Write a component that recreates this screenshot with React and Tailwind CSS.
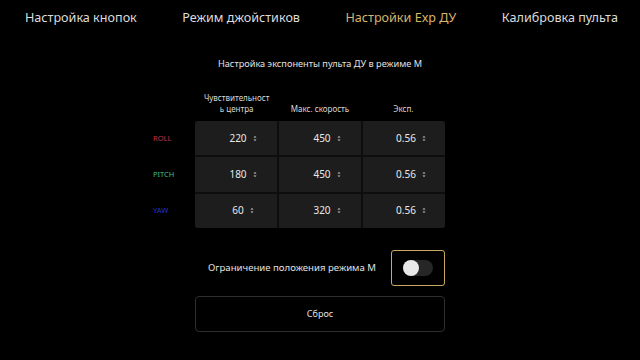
import React from "react";

const tabs = [
  { t: "Настройка кнопок", active: false },
  { t: "Режим джойстиков", active: false },
  { t: "Настройки Exp ДУ", active: true },
  { t: "Калибровка пульта", active: false },
];

const rows = [
  { label: "ROLL", color: "text-[#c4324f]", v: ["220", "450", "0.56"] },
  { label: "PITCH", color: "text-[#3fbf82]", v: ["180", "450", "0.56"] },
  { label: "YAW", color: "text-[#2433c8]", v: ["60", "320", "0.56"] },
];

function Spin() {
  return (
    <svg width="4" height="7" viewBox="0 0 4 7" className="ml-[6px]">
      <path d="M0.5 2.6 L2 1 L3.5 2.6 Z" fill="#cfcfcf" />
      <path d="M0.5 4.4 L2 6 L3.5 4.4 Z" fill="#cfcfcf" />
    </svg>
  );
}

export default function App() {
  return (
    <div
      className="w-[640px] h-[360px] bg-black text-[#e6e6e6] overflow-hidden"
      style={{ fontFamily: '"Noto Sans", "Open Sans", sans-serif' }}
    >
      <div className="flex justify-between h-[36px] items-center pl-[25px] pr-[22px] text-[12.6px]">
        {tabs.map((x) => (
          <div key={x.t} className={x.active ? "text-[#d6b66c]" : "text-[#dcdcdc]"}>
            {x.t}
          </div>
        ))}
      </div>

      <div className="text-center text-[9.2px] mt-[21px] leading-[14px] text-[#e0e0e0]">
        Настройка экспоненты пульта ДУ в режиме М
      </div>

      <div className="flex justify-center mt-[13px]">
        <div className="w-[42px] shrink-0" />
        <div className="w-[250px]">
          <div className="grid grid-cols-3 text-[8px] leading-[11px] text-[#d8d8d8] h-[30px] items-end">
            <div className="text-center px-[7px] break-all">Чувствительность центра</div>
            <div className="text-center">Макс. скорость</div>
            <div className="text-center">Эксп.</div>
          </div>
        </div>
        <div className="w-[42px] shrink-0" />
      </div>

      <div className="flex justify-center mt-[7px]">
        <div className="w-[42px] shrink-0 grid grid-rows-3 h-[107px]">
          {rows.map((r) => (
            <div key={r.label} className={`flex items-center text-[7.5px] ${r.color}`}>
              {r.label}
            </div>
          ))}
        </div>
        <div className="w-[250px] h-[107px] grid grid-cols-3 grid-rows-3 gap-[2px] bg-[#0d0d0d] rounded-[3px] overflow-hidden">
          {rows.map((r) =>
            r.v.map((v, i) => (
              <div
                key={r.label + i}
                className="bg-[#1d1d1d] flex items-center justify-center pl-[14px] text-[10px] text-[#e8e8e8]"
              >
                <span>{v}</span>
                <Spin />
              </div>
            ))
          )}
        </div>
        <div className="w-[42px] shrink-0" />
      </div>

      <div className="flex justify-center mt-[22px]">
        <div className="w-[250px] flex items-center">
          <div className="flex-1 text-center text-[9.6px] text-[#e0e0e0] pr-[2px]">
            Ограничение положения режима М
          </div>
          <div className="w-[54px] h-[36px] border-[1.5px] border-[#c9aa62] rounded-[3px] flex items-center justify-center">
            <div className="w-[30px] h-[16px] rounded-full bg-[#262626] relative">
              <div className="absolute left-0 top-0 w-[16px] h-[16px] rounded-full bg-[#e8e8e8]" />
            </div>
          </div>
        </div>
      </div>

      <div className="flex justify-center mt-[10px]">
        <div className="w-[250px] h-[36px] border border-[#2e2e2e] rounded-[4px] flex items-center justify-center text-[9px] text-[#e0e0e0]">
          Сброс
        </div>
      </div>
    </div>
  );
}
